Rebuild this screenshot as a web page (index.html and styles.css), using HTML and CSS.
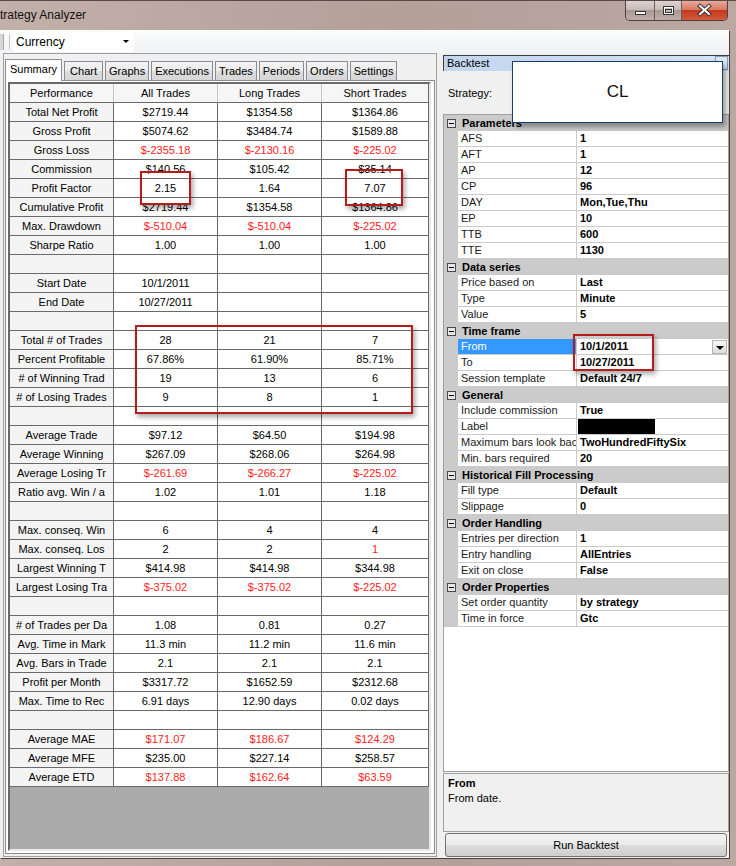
FILE: index.html
```html
<!DOCTYPE html>
<html lang="en">
<head>
<meta charset="UTF-8">
<title>Strategy Analyzer</title>
<link rel="stylesheet" href="styles.css">
</head>
<body>
<div class="window">
  <div class="titlebar">
    <span class="title">trategy Analyzer</span>
    <div class="caption">
      <div class="cap-btn cap-min">
        <svg width="28" height="19"><rect x="9.5" y="10.5" width="10" height="3" fill="#fff" stroke="#333"/></svg>
      </div>
      <div class="cap-btn cap-max">
        <svg width="26" height="19"><rect x="8.5" y="5.5" width="10" height="8" fill="none" stroke="#333"/><rect x="9.5" y="6.5" width="8" height="6" fill="none" stroke="#fff"/><rect x="10.5" y="8.5" width="6" height="3" fill="#c9bdb9" stroke="#333"/></svg>
      </div>
      <div class="cap-btn cap-close">
        <svg width="45" height="19"><path d="M18 5 L27 13 M27 5 L18 13" stroke="#333" stroke-width="4" stroke-linecap="square"/><path d="M18 5 L27 13 M27 5 L18 13" stroke="#fff" stroke-width="2" stroke-linecap="square"/></svg>
      </div>
    </div>
  </div>

  <div class="client">
    <div class="toolbar">
      <span class="tb-stub"></span>
      <span class="tb-sep"></span>
      <div class="combo">Currency<span class="combo-arrow"></span></div>
    </div>

    <div class="main">
      <!-- left: results tabs -->
      <div class="left-panel">
        <div class="tabs">
          <div class="tab active">Summary</div>
          <div class="tab">Chart</div>
          <div class="tab">Graphs</div>
          <div class="tab">Executions</div>
          <div class="tab">Trades</div>
          <div class="tab">Periods</div>
          <div class="tab">Orders</div>
          <div class="tab">Settings</div>
        </div>
        <div class="tab-page">
          <div class="grid-box">
            <div class="perf">
              <div class="row head"><div>Performance</div><div>All Trades</div><div>Long Trades</div><div>Short Trades</div></div>
              <div class="row"><div class="hd">Total Net Profit</div><div>$2719.44</div><div>$1354.58</div><div>$1364.86</div></div>
              <div class="row"><div class="hd">Gross Profit</div><div>$5074.62</div><div>$3484.74</div><div>$1589.88</div></div>
              <div class="row"><div class="hd">Gross Loss</div><div class="neg">$-2355.18</div><div class="neg">$-2130.16</div><div class="neg">$-225.02</div></div>
              <div class="row"><div class="hd">Commission</div><div>$140.56</div><div>$105.42</div><div>$35.14</div></div>
              <div class="row"><div class="hd">Profit Factor</div><div>2.15</div><div>1.64</div><div>7.07</div></div>
              <div class="row"><div class="hd">Cumulative Profit</div><div>$2719.44</div><div>$1354.58</div><div>$1364.86</div></div>
              <div class="row"><div class="hd">Max. Drawdown</div><div class="neg">$-510.04</div><div class="neg">$-510.04</div><div class="neg">$-225.02</div></div>
              <div class="row"><div class="hd">Sharpe Ratio</div><div>1.00</div><div>1.00</div><div>1.00</div></div>
              <div class="row"><div class="hd"></div><div></div><div></div><div></div></div>
              <div class="row"><div class="hd">Start Date</div><div>10/1/2011</div><div></div><div></div></div>
              <div class="row"><div class="hd">End Date</div><div>10/27/2011</div><div></div><div></div></div>
              <div class="row"><div class="hd"></div><div></div><div></div><div></div></div>
              <div class="row"><div class="hd">Total # of Trades</div><div>28</div><div>21</div><div>7</div></div>
              <div class="row"><div class="hd">Percent Profitable</div><div>67.86%</div><div>61.90%</div><div>85.71%</div></div>
              <div class="row"><div class="hd"># of Winning Trad</div><div>19</div><div>13</div><div>6</div></div>
              <div class="row"><div class="hd"># of Losing Trades</div><div>9</div><div>8</div><div>1</div></div>
              <div class="row"><div class="hd"></div><div></div><div></div><div></div></div>
              <div class="row"><div class="hd">Average Trade</div><div>$97.12</div><div>$64.50</div><div>$194.98</div></div>
              <div class="row"><div class="hd">Average Winning</div><div>$267.09</div><div>$268.06</div><div>$264.98</div></div>
              <div class="row"><div class="hd">Average Losing Tr</div><div class="neg">$-261.69</div><div class="neg">$-266.27</div><div class="neg">$-225.02</div></div>
              <div class="row"><div class="hd">Ratio avg. Win / a</div><div>1.02</div><div>1.01</div><div>1.18</div></div>
              <div class="row"><div class="hd"></div><div></div><div></div><div></div></div>
              <div class="row"><div class="hd">Max. conseq. Win</div><div>6</div><div>4</div><div>4</div></div>
              <div class="row"><div class="hd">Max. conseq. Los</div><div>2</div><div>2</div><div class="neg">1</div></div>
              <div class="row"><div class="hd">Largest Winning T</div><div>$414.98</div><div>$414.98</div><div>$344.98</div></div>
              <div class="row"><div class="hd">Largest Losing Tra</div><div class="neg">$-375.02</div><div class="neg">$-375.02</div><div class="neg">$-225.02</div></div>
              <div class="row"><div class="hd"></div><div></div><div></div><div></div></div>
              <div class="row"><div class="hd"># of Trades per Da</div><div>1.08</div><div>0.81</div><div>0.27</div></div>
              <div class="row"><div class="hd">Avg. Time in Mark</div><div>11.3 min</div><div>11.2 min</div><div>11.6 min</div></div>
              <div class="row"><div class="hd">Avg. Bars in Trade</div><div>2.1</div><div>2.1</div><div>2.1</div></div>
              <div class="row"><div class="hd">Profit per Month</div><div>$3317.72</div><div>$1652.59</div><div>$2312.68</div></div>
              <div class="row"><div class="hd">Max. Time to Rec</div><div>6.91 days</div><div>12.90 days</div><div>0.02 days</div></div>
              <div class="row"><div class="hd"></div><div></div><div></div><div></div></div>
              <div class="row"><div class="hd">Average MAE</div><div class="neg">$171.07</div><div class="neg">$186.67</div><div class="neg">$124.29</div></div>
              <div class="row"><div class="hd">Average MFE</div><div>$235.00</div><div>$227.14</div><div>$258.57</div></div>
              <div class="row"><div class="hd">Average ETD</div><div class="neg">$137.88</div><div class="neg">$162.64</div><div class="neg">$63.59</div></div>
            </div>
          </div>
        </div>
      </div>

      <!-- right: backtest settings -->
      <div class="right-panel">
        <div class="dock-title">Backtest<span class="dock-btn"></span></div>
        <div class="strategy-row">Strategy:</div>
        <div class="pg">
          <div class="pg-cat"><span class="exp"></span>Parameters</div>
          <div class="pg-row"><span class="pg-name">AFS</span><span class="pg-val">1</span></div>
          <div class="pg-row"><span class="pg-name">AFT</span><span class="pg-val">1</span></div>
          <div class="pg-row"><span class="pg-name">AP</span><span class="pg-val">12</span></div>
          <div class="pg-row"><span class="pg-name">CP</span><span class="pg-val">96</span></div>
          <div class="pg-row"><span class="pg-name">DAY</span><span class="pg-val">Mon,Tue,Thu</span></div>
          <div class="pg-row"><span class="pg-name">EP</span><span class="pg-val">10</span></div>
          <div class="pg-row"><span class="pg-name">TTB</span><span class="pg-val">600</span></div>
          <div class="pg-row"><span class="pg-name">TTE</span><span class="pg-val">1130</span></div>
          <div class="pg-cat"><span class="exp"></span>Data series</div>
          <div class="pg-row"><span class="pg-name">Price based on</span><span class="pg-val">Last</span></div>
          <div class="pg-row"><span class="pg-name">Type</span><span class="pg-val">Minute</span></div>
          <div class="pg-row"><span class="pg-name">Value</span><span class="pg-val">5</span></div>
          <div class="pg-cat"><span class="exp"></span>Time frame</div>
          <div class="pg-row"><span class="pg-name sel">From</span><span class="pg-val">10/1/2011<span class="dd"></span></span></div>
          <div class="pg-row"><span class="pg-name">To</span><span class="pg-val">10/27/2011</span></div>
          <div class="pg-row"><span class="pg-name">Session template</span><span class="pg-val">Default 24/7</span></div>
          <div class="pg-cat"><span class="exp"></span>General</div>
          <div class="pg-row"><span class="pg-name">Include commission</span><span class="pg-val">True</span></div>
          <div class="pg-row"><span class="pg-name">Label</span><span class="pg-val"><span class="redact"></span></span></div>
          <div class="pg-row"><span class="pg-name">Maximum bars look bac</span><span class="pg-val">TwoHundredFiftySix</span></div>
          <div class="pg-row"><span class="pg-name">Min. bars required</span><span class="pg-val">20</span></div>
          <div class="pg-cat"><span class="exp"></span>Historical Fill Processing</div>
          <div class="pg-row"><span class="pg-name">Fill type</span><span class="pg-val">Default</span></div>
          <div class="pg-row"><span class="pg-name">Slippage</span><span class="pg-val">0</span></div>
          <div class="pg-cat"><span class="exp"></span>Order Handling</div>
          <div class="pg-row"><span class="pg-name">Entries per direction</span><span class="pg-val">1</span></div>
          <div class="pg-row"><span class="pg-name">Entry handling</span><span class="pg-val">AllEntries</span></div>
          <div class="pg-row"><span class="pg-name">Exit on close</span><span class="pg-val">False</span></div>
          <div class="pg-cat"><span class="exp"></span>Order Properties</div>
          <div class="pg-row"><span class="pg-name">Set order quantity</span><span class="pg-val">by strategy</span></div>
          <div class="pg-row"><span class="pg-name">Time in force</span><span class="pg-val">Gtc</span></div>
        </div>
        <div class="help">
          <div class="help-title">From</div>
          <div>From date.</div>
        </div>
        <button class="run-btn">Run Backtest</button>
      </div>
    </div>
  </div>

  <!-- overlays -->
  <div class="strategy-popup">CL</div>
  <div class="mark mark-pf-all"></div>
  <div class="mark mark-pf-short"></div>
  <div class="mark mark-trades"></div>
  <div class="mark mark-dates"></div>
</div>
</body>
</html>
```

FILE: styles.css
```css
/* base */
html, body {
  margin: 0;
  padding: 0;
  width: 736px;
  height: 866px;
  overflow: hidden;
  font-family: "Liberation Sans", Arial, sans-serif;
  font-size: 11px;
  color: #000;
}

.window {
  position: relative;
  height: 866px;
  display: flex;
  flex-direction: column;
  background: linear-gradient(to right, #c2b0aa, #b49f99 55%, #bba8a3);
  border-top: 1px solid #5a4a47;
  box-sizing: border-box;
}

/* title bar */
.titlebar {
  height: 29px;
  display: flex;
  align-items: flex-start;
  overflow: hidden;
}
.title {
  margin-left: 0;
  margin-top: 7px;
  font-size: 12px;
  color: #111;
}
.caption {
  margin-left: auto;
  margin-right: 8px;
  display: flex;
  border: 1px solid #4e3f3c;
  border-top: none;
  border-radius: 0 0 5px 5px;
  overflow: hidden;
  height: 19px;
}
.cap-btn { height: 19px; }
.cap-min, .cap-max {
  background: linear-gradient(#ddd3d0, #c8bcb8 45%, #ab9993 50%, #bcaea9);
  border-right: 1px solid #6e5f5b;
}
.cap-min { width: 28px; }
.cap-max { width: 26px; }
.cap-close {
  width: 45px;
  background: linear-gradient(#e9ab9d, #d67a63 45%, #c2391f 50%, #d45a3c);
}

/* client area */
.client {
  flex: 1;
  margin: 0 7px 8px 0;
  display: flex;
  flex-direction: column;
  background: #f0f0f0;
  box-shadow: 1px 1px 0 #4e403d;
}

.toolbar {
  height: 23px;
  display: flex;
  align-items: center;
  background: linear-gradient(#fcfcfc, #f1f2f4);
}
.tb-stub {
  width: 3px;
  height: 16px;
  background: #d6d6d6;
  border-right: 1px solid #a8a8a8;
}
.tb-sep {
  width: 1px;
  height: 16px;
  margin-left: 5px;
  background: #c5c5c5;
  box-shadow: 1px 0 0 #fff;
}
.combo {
  margin-left: 3px;
  width: 121px;
  height: 20px;
  box-sizing: border-box;
  padding-left: 3px;
  display: flex;
  align-items: center;
  background: #fff;
  font-size: 12px;
}
.combo-arrow {
  margin-left: auto;
  margin-right: 5px;
  border-left: 3px solid transparent;
  border-right: 3px solid transparent;
  border-top: 3px solid #000;
}

.main {
  flex: 1;
  display: flex;
  padding-left: 3px;
  gap: 6px;
}

/* left panel */
.left-panel {
  width: 434px;
  box-sizing: border-box;
  margin-bottom: 1px;
  border: 1px solid #a0a0a0;
  padding: 4px 1px 2px 1px;
  display: flex;
  flex-direction: column;
}
.tabs {
  height: 22px;
  display: flex;
  align-items: flex-end;
  gap: 2px;
}
.tab {
  height: 18px;
  line-height: 18px;
  padding: 0 3px;
  min-width: 31px;
  text-align: center;
  border: 1px solid #898c95;
  border-bottom: none;
  background: linear-gradient(#f3f3f3, #ebebeb 50%, #dddddd 50%, #d6d6d6);
}
.tab.active {
  height: 21px;
  line-height: 19px;
  padding: 0 4px;
  background: #fff;
  position: relative;
  z-index: 1;
  margin-bottom: -1px;
}
.tab-page {
  flex: 1;
  border: 1px solid #898c95;
  background: #fff;
  padding: 1px 0 2px 2px;
  display: flex;
}
.grid-box {
  width: 423px;
  box-sizing: border-box;
  border: 2px solid;
  border-color: #6a6a6a #e8e8e8 #e8e8e8 #6a6a6a;
  background: #ababab;
}

.perf { background: #fff; }
.row {
  display: flex;
  height: 19px;
}
.row > div {
  box-sizing: border-box;
  width: 104px;
  border-right: 1px solid #696969;
  border-bottom: 1px solid #696969;
  line-height: 18px;
  text-align: center;
  white-space: nowrap;
  overflow: hidden;
}
.row > div:last-child { width: 107px; }
.row > .hd { background: #f4f4f4; }
.row.head > div {
  background: #f6f6f6;
  border-right-color: #c6c6c6;
}
.row.head > div:last-child { border-right-color: #696969; }
.neg { color: #ff1a1a; }

/* right panel */
.right-panel {
  width: 286px;
  display: flex;
  flex-direction: column;
  padding-bottom: 1px;
}
.dock-title {
  margin-top: 2px;
  height: 16px;
  box-sizing: border-box;
  padding-left: 3px;
  line-height: 14px;
  display: flex;
  background: linear-gradient(to right, #c2d6ee, #d6e3f3);
  border-top: 1px solid #3c3c3c;
  border-left: 1px solid #3c3c3c;
}
.dock-btn {
  margin-left: auto;
  margin-right: 1px;
  width: 11px;
  height: 12px;
  border: 1px solid #7f9db9;
  background: #dce8f5;
}
.strategy-row {
  height: 43px;
  padding-left: 5px;
  display: flex;
  align-items: center;
}

/* property grid */
.pg {
  flex: 1;
  border: 1px solid #a0a0a0;
  background: #fff;
}
.pg-cat {
  height: 16px;
  display: flex;
  align-items: center;
  background: #cbcbcb;
  font-weight: bold;
}
.exp {
  position: relative;
  width: 9px;
  height: 9px;
  box-sizing: border-box;
  margin: 0 6px 0 3px;
  border: 1px solid #4a4a4a;
  background: #e6e6e6;
}
.exp::after {
  content: "";
  position: absolute;
  left: 1px;
  top: 3px;
  width: 5px;
  height: 1px;
  background: #000;
}
.pg-row {
  height: 16px;
  display: flex;
  padding-left: 14px;
  background: #cbcbcb;
}
.pg-name, .pg-val {
  box-sizing: border-box;
  height: 16px;
  line-height: 15px;
  padding-left: 3px;
  border-bottom: 1px solid #cbcbcb;
  background: #fff;
  white-space: nowrap;
  overflow: hidden;
}
.pg-name {
  width: 119px;
  border-right: 1px solid #cbcbcb;
  color: #1a1a1a;
}
.pg-name.sel {
  background: #3399ff;
  color: #fff;
}
.pg-val {
  flex: 1;
  display: flex;
  align-items: center;
  font-weight: bold;
}
.dd {
  position: relative;
  margin-left: auto;
  margin-right: 1px;
  width: 15px;
  height: 14px;
  box-sizing: border-box;
  border: 1px solid #b5b5b5;
  background: linear-gradient(#f6f6f6, #dedede);
}
.dd::after {
  content: "";
  position: absolute;
  left: 3px;
  top: 5px;
  border-left: 4px solid transparent;
  border-right: 4px solid transparent;
  border-top: 4px solid #000;
}
.redact {
  width: 77px;
  height: 15px;
  background: #000;
  margin-left: -2px;
}

.help {
  height: 59px;
  margin-top: 1px;
  box-sizing: border-box;
  padding: 2px 4px;
  border: 1px solid #a0a0a0;
  background: #f0f0f0;
  line-height: 15px;
}
.help-title { font-weight: bold; }

.run-btn {
  margin: 1px 2px 0 2px;
  height: 24px;
  border: 1px solid #707070;
  border-radius: 3px;
  background: linear-gradient(#f2f2f2, #ebebeb 50%, #dddddd 50%, #cfcfcf);
  font-family: "Liberation Sans", Arial, sans-serif;
  font-size: 11px;
  color: #000;
}

/* overlays */
.strategy-popup {
  position: absolute;
  left: 512px;
  top: 60px;
  width: 211px;
  height: 62px;
  box-sizing: border-box;
  border: 1px solid #1b3d6e;
  background: #fff;
  box-shadow: 3px 4px 5px rgba(0, 0, 0, 0.35);
  display: flex;
  align-items: center;
  justify-content: center;
  font-size: 17px;
  color: #111;
}
.mark {
  position: absolute;
  box-sizing: border-box;
  border: 2px solid #b71c1c;
  box-shadow: 2px 3px 5px rgba(0, 0, 0, 0.35);
}
.mark-pf-all { left: 140px; top: 170px; width: 51px; height: 34px; }
.mark-pf-short { left: 345px; top: 168px; width: 58px; height: 37px; }
.mark-trades { left: 135px; top: 324px; width: 278px; height: 89px; }
.mark-dates { left: 573px; top: 333px; width: 81px; height: 37px; }
```
